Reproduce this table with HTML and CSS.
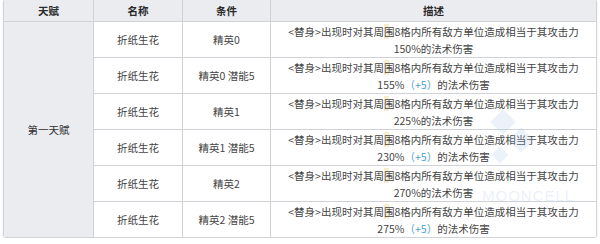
FILE: index.html
```html
<!DOCTYPE html>
<html lang="zh">
<head>
<meta charset="utf-8">
<link rel="stylesheet" href="styles.css">
</head>
<body>
<div class="wrap">
  <table class="talent">
    <colgroup>
      <col class="c1"><col class="c2"><col class="c3"><col class="c4">
    </colgroup>
    <thead>
      <tr><th>天赋</th><th>名称</th><th>条件</th><th>描述</th></tr>
    </thead>
    <tbody>
      <tr>
        <td class="group" rowspan="6">第一天赋</td>
        <td>折纸生花</td><td>精英0</td>
        <td class="desc">&lt;替身&gt;出现时对其周<span class="hl">围</span>8格内所有敌方单位造成相当于其攻击力<br>150%的法术伤害</td>
      </tr>
      <tr>
        <td>折纸生花</td><td>精英0 潜能5</td>
        <td class="desc">&lt;替身&gt;出现时对其周<span class="hl">围</span>8格内所有敌方单位造成相当于其攻击力<br>155%<span class="plus">（+5）</span>的法术伤害</td>
      </tr>
      <tr>
        <td>折纸生花</td><td>精英1</td>
        <td class="desc">&lt;替身&gt;出现时对其周<span class="hl">围</span>8格内所有敌方单位造成相当于其攻击力<br>225%的法术伤害</td>
      </tr>
      <tr>
        <td>折纸生花</td><td>精英1 潜能5</td>
        <td class="desc">&lt;替身&gt;出现时对其周<span class="hl">围</span>8格内所有敌方单位造成相当于其攻击力<br>230%<span class="plus">（+5）</span>的法术伤害</td>
      </tr>
      <tr>
        <td>折纸生花</td><td>精英2</td>
        <td class="desc">&lt;替身&gt;出现时对其周<span class="hl">围</span>8格内所有敌方单位造成相当于其攻击力<br>270%的法术伤害</td>
      </tr>
      <tr>
        <td>折纸生花</td><td>精英2 潜能5</td>
        <td class="desc">&lt;替身&gt;出现时对其周<span class="hl">围</span>8格内所有敌方单位造成相当于其攻击力<br>275%<span class="plus">（+5）</span>的法术伤害</td>
      </tr>
    </tbody>
  </table>
  <div class="watermark" aria-hidden="true">
    <span class="dia d1"></span>
    <span class="dia d2"></span>
    <span class="dia d3"></span>
    <span class="wm-text">MOONCELL</span>
  </div>
</div>
</body>
</html>
```
FILE: styles.css
```css
html, body {
  margin: 0;
  padding: 0;
  background: #ffffff;
}
body {
  font-family: "Noto Sans CJK SC", "Noto Sans", sans-serif;
  font-size: 10.5px;
  color: #3a3a3a;
}
.wrap {
  position: relative;
  width: 592px;
  margin: -1px 0 0 3px;
  border: 1px solid #d0d3d8;
  border-radius: 3px;
  overflow: hidden;
  box-shadow: 0 1px 2px rgba(0, 0, 0, 0.12);
}
.talent {
  width: 100%;
  border-collapse: separate;
  border-spacing: 0;
  table-layout: fixed;
}
.c1 { width: 90px; }
.c2 { width: 89px; }
.c3 { width: 88px; }
.c4 { width: auto; }
.talent th,
.talent td {
  padding: 0;
  text-align: center;
  vertical-align: middle;
  border-right: 1px solid #cfd2d7;
  border-bottom: 1px solid #cfd2d7;
}
.talent th:last-child,
.talent td:last-child {
  border-right: none;
}
.talent tbody tr:last-child td {
  border-bottom: none;
}
.talent td.group {
  border-bottom: none;
}
.talent th {
  background: #eaecf0;
  height: 21px;
  font-weight: bold;
  color: #2a2a2a;
}
.talent td {
  height: 35px;
  background: #ffffff;
  color: #444444;
}
.talent td.group {
  background: #eaecf0;
  color: #2f2f2f;
}
.talent td.desc {
  line-height: 17px;
}
.plus {
  color: #4a9fd0;
}
.hl {
  background: linear-gradient(90deg, rgba(240, 225, 160, 0.55) 0 45%, transparent 45%);
}
.watermark {
  position: absolute;
  left: 450px;
  top: 105px;
  width: 110px;
  height: 105px;
  pointer-events: none;
}
.dia {
  position: absolute;
  width: 18px;
  height: 18px;
  background: rgba(170, 195, 230, 0.22);
  transform: rotate(45deg);
}
.d1 { left: 40px; top: 8px; }
.d2 { left: 58px; top: 26px; }
.d3 { left: 40px; top: 44px; width: 12px; height: 12px; }
.wm-text {
  position: absolute;
  left: 28px;
  top: 82px;
  font-family: "Liberation Sans", sans-serif;
  font-size: 15px;
  letter-spacing: 1px;
  color: rgba(170, 195, 230, 0.25);
}
```
